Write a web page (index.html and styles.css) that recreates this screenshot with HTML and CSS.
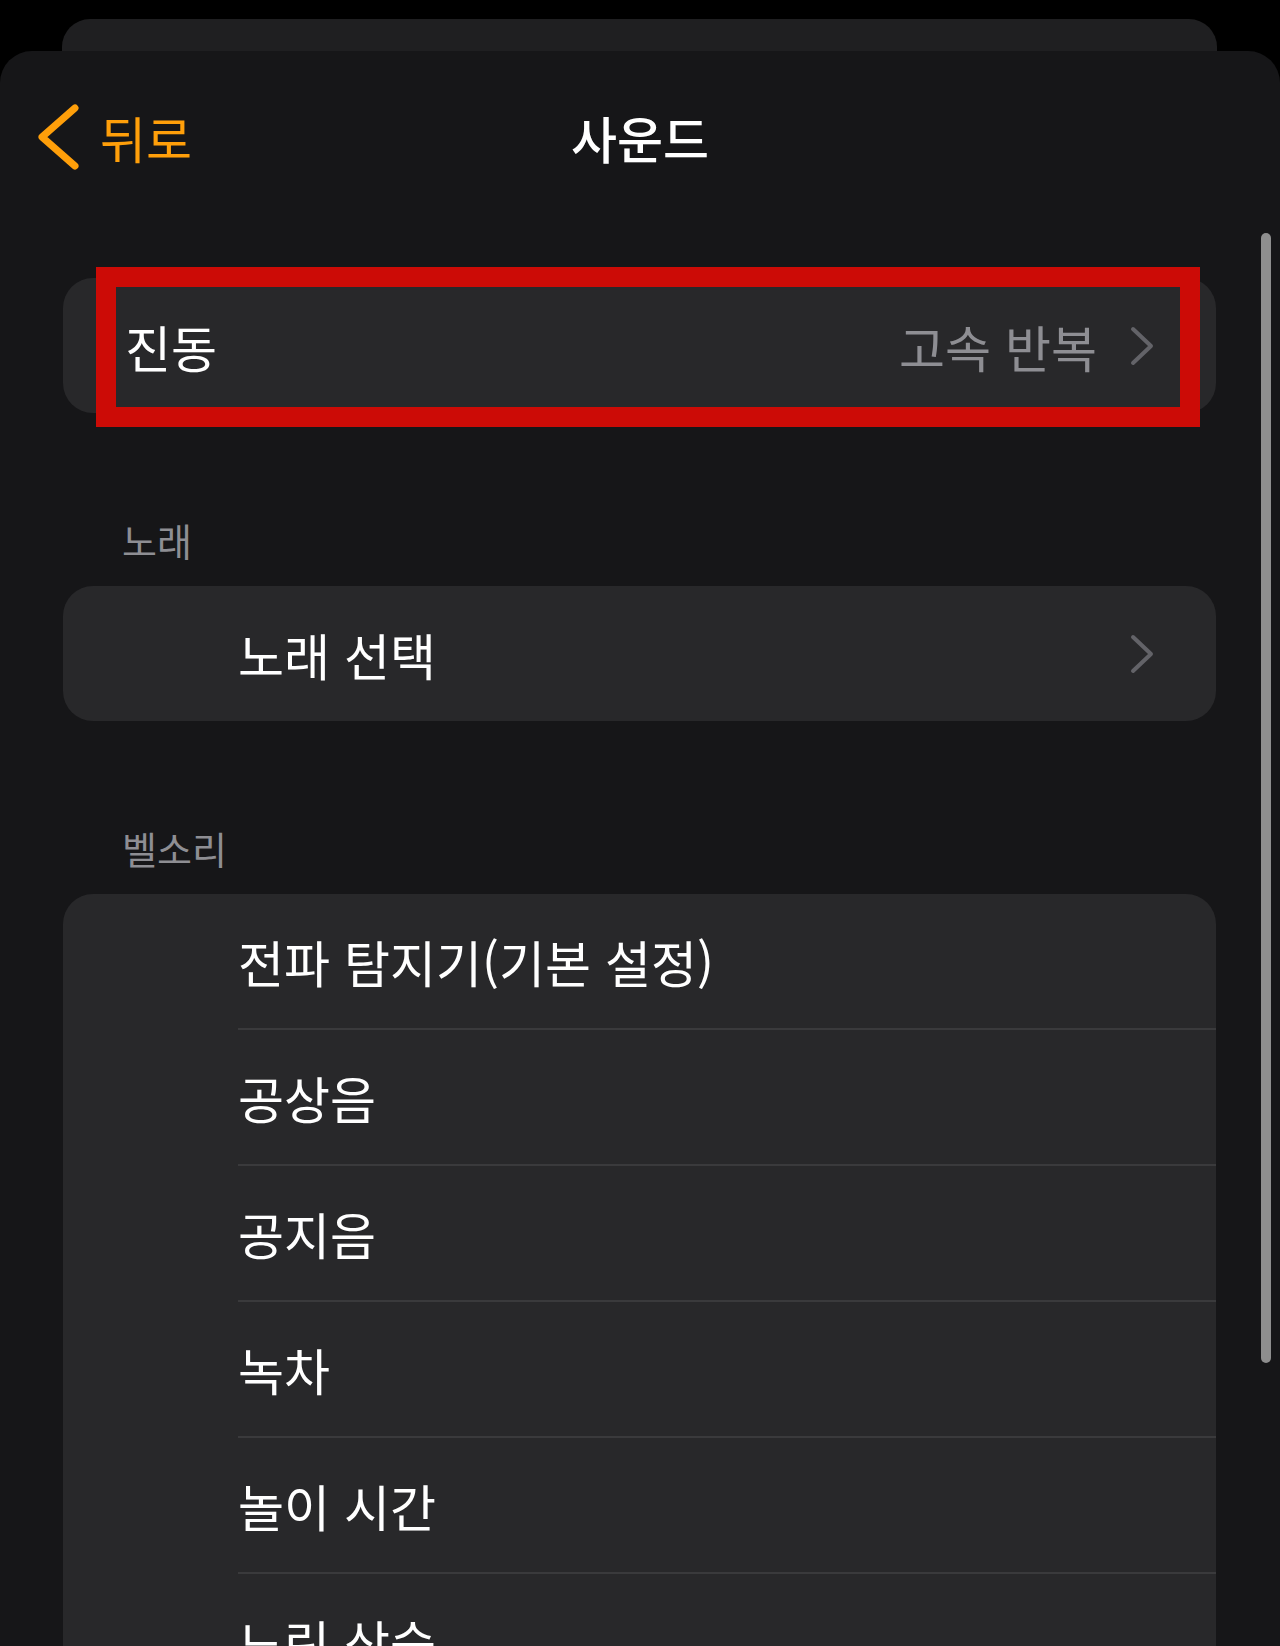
FILE: index.html
```html
<!DOCTYPE html>
<html lang="ko">
<head>
    <meta charset="UTF-8">
    <meta name="viewport" content="width=device-width, initial-scale=1.0">
    <title>사운드</title>

    <link rel="stylesheet" href="styles.css">

</head>
<body>
    <div class="back-card"></div>

    <div class="sheet">

        <div class="nav">
            <a class="nav-back" href="#">
                <svg class="back-icon" viewBox="0 0 42 66" width="42" height="66">
                    <path d="M37 4 L4 33 L37 62" />
                </svg>
                <span>뒤로</span>
            </a>
            <h1 class="nav-title">사운드</h1>
            <div></div>
        </div>

        <div class="card card-marked">
            <div class="row">
                <span class="row-label">진동</span>
                <span class="row-value">고속 반복</span>
                <svg class="chevron" viewBox="0 0 26 42" width="26" height="42">
                    <path d="M4 4 L22 21 L4 38" />
                </svg>
            </div>
            <div class="highlight"></div>
        </div>

        <h2 class="section-title">노래</h2>
        <div class="card">
            <div class="row row-indent">
                <span class="row-label">노래 선택</span>
                <svg class="chevron" viewBox="0 0 26 42" width="26" height="42">
                    <path d="M4 4 L22 21 L4 38" />
                </svg>
            </div>
        </div>

        <h2 class="section-title">벨소리</h2>
        <ul class="card tone-list">
            <li><span>전파 탐지기(기본 설정)</span></li>
            <li><span>공상음</span></li>
            <li><span>공지음</span></li>
            <li><span>녹차</span></li>
            <li><span>놀이 시간</span></li>
            <li><span>느린 상승</span></li>
        </ul>

        <div class="scrollbar"></div>
    </div>
</body>
</html>
```

FILE: styles.css
```css
* {
    margin: 0;
    padding: 0;
    box-sizing: border-box;
}

body {
    width: 1280px;
    height: 1646px;
    overflow: hidden;
    background-color: #000;
    color: #fff;
    font-family: "Noto Sans CJK KR", "Noto Sans", sans-serif;
}

.back-card {
    height: 32px;
    margin: 19px 63px 0 62px;
    background-color: #1f1f21;
    border-radius: 28px 28px 0 0;
}

.sheet {
    position: relative;
    min-height: 1595px;
    background-color: #161618;
    border-radius: 32px 32px 0 0;
}

/* top bar */
.nav {
    height: 172px;
    display: grid;
    grid-template-columns: 1fr auto 1fr;
    align-items: center;
}

.nav-back {
    display: flex;
    align-items: center;
    gap: 20px;
    padding-left: 38px;
    color: #ff9f0a;
    text-decoration: none;
    font-size: 50px;
    line-height: 66px;
}

.back-icon path {
    fill: none;
    stroke: #ff9f0a;
    stroke-width: 7;
    stroke-linecap: round;
    stroke-linejoin: round;
}

.nav-title {
    font-size: 50px;
    font-weight: 500;
    line-height: 66px;
}

/* grouped cards */
.card {
    position: relative;
    margin: 0 64px 0 63px;
    background-color: #28282a;
    border-radius: 30px;
    list-style: none;
}

.card-marked {
    margin-top: 55px;
}

.row {
    height: 135px;
    display: flex;
    align-items: center;
    padding: 0 61px 0 62px;
    font-size: 50px;
}

.row-indent {
    padding-left: 175px;
}

.row-label {
    flex: 1;
}

.row-value {
    color: #8e8e93;
    margin-right: 32px;
}

.chevron path {
    fill: none;
    stroke: #636368;
    stroke-width: 4;
    stroke-linecap: round;
    stroke-linejoin: round;
}

.highlight {
    position: absolute;
    left: 33px;
    top: -11px;
    width: 1104px;
    height: 160px;
    border: 20px solid #cc0b06;
}

.section-title {
    margin: 104px 0 23px 122px;
    font-size: 38px;
    font-weight: 400;
    line-height: 46px;
    color: #8e8e93;
}

.tone-list li {
    padding-left: 175px;
}

.tone-list li span {
    display: flex;
    align-items: center;
    height: 136px;
    border-bottom: 2px solid #3a3a3c;
    font-size: 50px;
}

.scrollbar {
    position: absolute;
    top: 182px;
    right: 9px;
    width: 10px;
    height: 1130px;
    border-radius: 5px;
    background-color: #8e8e8e;
}
```
